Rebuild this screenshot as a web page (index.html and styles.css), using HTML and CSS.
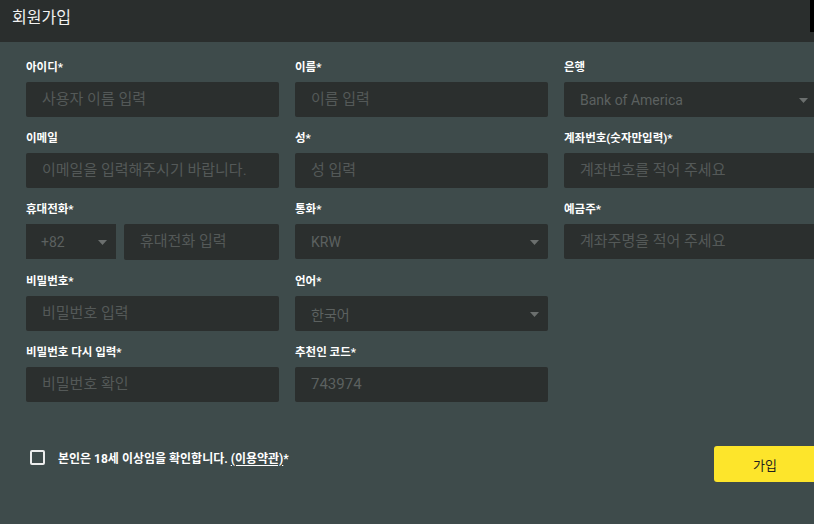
FILE: index.html
```html
<!DOCTYPE html>
<html lang="ko">
<head>
<meta charset="utf-8">
<title>회원가입</title>
<link rel="stylesheet" href="styles.css">
</head>
<body>
<header class="topbar">
  <h1 class="title">회원가입</h1>
  <div class="edge"></div>
</header>
<main class="form">
  <div class="grid">
    <div class="field">
      <label class="label">아이디*</label>
      <input class="input" type="text" placeholder="사용자 이름 입력">
    </div>
    <div class="field">
      <label class="label">이름*</label>
      <input class="input" type="text" placeholder="이름 입력">
    </div>
    <div class="field">
      <label class="label">은행</label>
      <div class="select"><span>Bank of America</span><svg class="caret" width="9" height="5" viewBox="0 0 9 5"><path d="M0 0H9L4.5 5Z" fill="#6b6f6e"/></svg></div>
    </div>

    <div class="field">
      <label class="label">이메일</label>
      <input class="input" type="text" placeholder="이메일을 입력해주시기 바랍니다.">
    </div>
    <div class="field">
      <label class="label">성*</label>
      <input class="input" type="text" placeholder="성 입력">
    </div>
    <div class="field">
      <label class="label">계좌번호(숫자만입력)*</label>
      <input class="input" type="text" placeholder="계좌번호를 적어 주세요">
    </div>

    <div class="field">
      <label class="label">휴대전화*</label>
      <div class="phone">
        <div class="select code"><span>+82</span><svg class="caret" width="9" height="5" viewBox="0 0 9 5"><path d="M0 0H9L4.5 5Z" fill="#6b6f6e"/></svg></div>
        <input class="input tall" type="text" placeholder="휴대전화 입력">
      </div>
    </div>
    <div class="field">
      <label class="label">통화*</label>
      <div class="select"><span>KRW</span><svg class="caret" width="9" height="5" viewBox="0 0 9 5"><path d="M0 0H9L4.5 5Z" fill="#6b6f6e"/></svg></div>
    </div>
    <div class="field">
      <label class="label">예금주*</label>
      <input class="input" type="text" placeholder="계좌주명을 적어 주세요">
    </div>

    <div class="field">
      <label class="label">비밀번호*</label>
      <input class="input" type="password" placeholder="비밀번호 입력">
    </div>
    <div class="field">
      <label class="label">언어*</label>
      <div class="select"><span>한국어</span><svg class="caret" width="9" height="5" viewBox="0 0 9 5"><path d="M0 0H9L4.5 5Z" fill="#6b6f6e"/></svg></div>
    </div>
    <div class="field empty"></div>

    <div class="field">
      <label class="label">비밀번호 다시 입력*</label>
      <input class="input" type="password" placeholder="비밀번호 확인">
    </div>
    <div class="field">
      <label class="label">추천인 코드*</label>
      <input class="input" type="text" value="743974" readonly>
    </div>
    <div class="field empty"></div>
  </div>

  <div class="bottom">
    <label class="agree">
      <span class="box"></span>
      <span class="agree-text">본인은 18세 이상임을 확인합니다. <u>(이용약관)</u>*</span>
    </label>
    <button class="submit" type="button">가입</button>
  </div>
</main>
</body>
</html>
```

FILE: styles.css
```css
* { box-sizing: border-box; }

html, body {
  margin: 0;
  padding: 0;
}

body {
  width: 814px;
  height: 524px;
  overflow: hidden;
  background: #3e4b4b;
  font-family: Roboto, "Noto Sans CJK KR", sans-serif;
  color: #ffffff;
}

.topbar {
  height: 42px;
  background: #2a2e2d;
  display: flex;
  align-items: flex-start;
  justify-content: space-between;
  padding-left: 12px;
}

.title {
  margin: 0;
  font-size: 16px;
  font-weight: 400;
  line-height: 35px;
  color: #f2f2f2;
}

.edge {
  width: 4px;
  height: 32px;
  background: #000;
}

.form {
  padding: 17px 0 0 26px;
}

.grid {
  display: grid;
  grid-template-columns: repeat(3, 253px);
  column-gap: 16px;
  row-gap: 13px;
}

.field {
  display: flex;
  flex-direction: column;
}

.label {
  font-size: 11.5px;
  font-weight: 700;
  line-height: 16px;
  height: 16px;
  margin-bottom: 7px;
  color: #ffffff;
  white-space: nowrap;
}

.input {
  height: 35px;
  width: 100%;
  border: none;
  outline: none;
  border-radius: 2px;
  background: #2b2f2e;
  padding: 0 16px 2px;
  font-family: Roboto, "Noto Sans CJK KR", sans-serif;
  font-size: 15px;
  color: #5c6160;
}

.input::placeholder {
  color: #545958;
}

.input.tall {
  height: 36px;
}

.select {
  height: 35px;
  background: #2b2f2e;
  border-radius: 2px;
  display: flex;
  align-items: center;
  justify-content: space-between;
  padding: 0 9px 0 16px;
  font-size: 14px;
  color: #5c6160;
}

.caret {
  display: block;
  margin-top: 1px;
}

.phone {
  display: flex;
  gap: 8px;
}

.select.code {
  width: 90px;
  flex: none;
  border-radius: 0;
  padding-left: 15px;
}

.bottom {
  display: flex;
  align-items: flex-start;
  justify-content: space-between;
  width: 790px;
  margin-top: 44px;
  padding-left: 4px;
}

.agree {
  display: flex;
  align-items: center;
  height: 16px;
  margin-top: 3px;
  gap: 13px;
}

.box {
  width: 15px;
  height: 15px;
  border: 2px solid #ececec;
  border-radius: 2px;
}

.agree-text {
  font-size: 12px;
  font-weight: 700;
  color: #ffffff;
  white-space: nowrap;
}

.agree-text u {
  text-underline-offset: 2px;
}

.submit {
  width: 102px;
  height: 36px;
  border: none;
  border-radius: 3px;
  background: #fde52b;
  color: #1f1f1f;
  font-family: Roboto, "Noto Sans CJK KR", sans-serif;
  font-size: 13px;
  padding: 0;
}
```
